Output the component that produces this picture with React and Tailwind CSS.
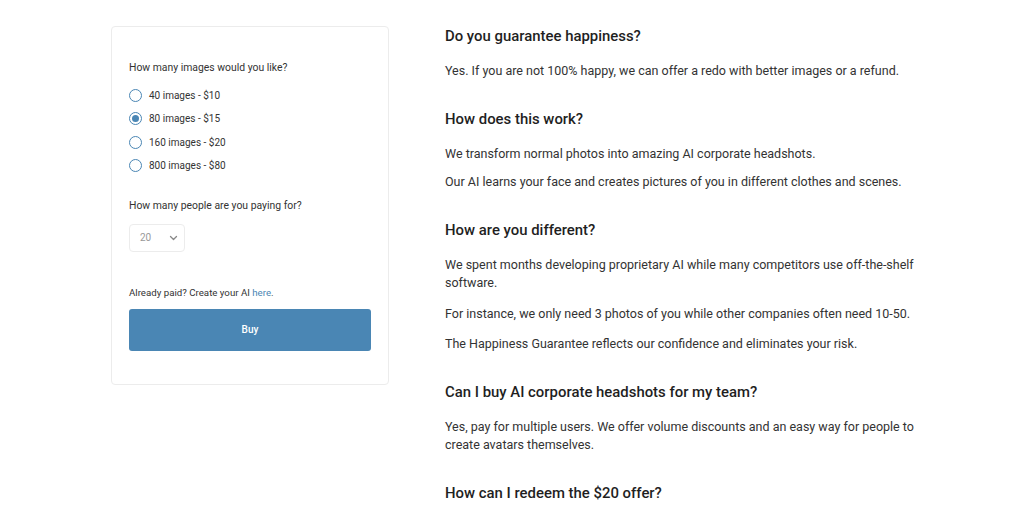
import React from 'react';

const OPTIONS = ['40 images - $10', '80 images - $15', '160 images - $20', '800 images - $80'];

function Radio({ checked }) {
  return (
    <span className="w-[13px] h-[13px] rounded-full border-[1.5px] border-[#4a86b4] flex items-center justify-center shrink-0 bg-white">
      {checked && <span className="w-[7px] h-[7px] rounded-full bg-[#4a86b4]" />}
    </span>
  );
}

function Faq({ q, wide, children }) {
  return (
    <div className="mb-[29px]">
      <h3 className="text-[14.9px] font-medium text-[#1f1f1f] leading-[20px] mb-[16px]">{q}</h3>
      <div className={`flex flex-col ${wide ? 'gap-[12.5px]' : 'gap-[10px]'} text-[12.5px] leading-[18px] text-[#333]`}>{children}</div>
    </div>
  );
}

export default function App() {
  return (
    <div className="w-[1024px] h-[506px] overflow-hidden bg-white flex pt-[26px] pl-[111px] font-['Roboto',sans-serif]">
      {/* order card */}
      <div className="w-[278px] h-[359px] border border-[#ececec] rounded-[4px] px-[17px] pt-[34px] shrink-0">
        <p className="text-[10.4px] text-[#333] leading-[14px]">How many images would you like?</p>
        <div className="flex flex-col gap-[9.5px] mt-[13px]">
          {OPTIONS.map((o, i) => (
            <label key={o} className="flex items-center gap-[7px] h-[14px] text-[10px] text-[#333]">
              <Radio checked={i === 1} />
              {o}
            </label>
          ))}
        </div>
        <p className="text-[10.4px] text-[#333] leading-[14px] mt-[26px]">How many people are you paying for?</p>
        <div className="mt-[11px] w-[56px] h-[28px] border border-[#ececec] rounded-[4px] flex items-center justify-between pl-[10px] pr-[6px] text-[10px] text-[#999]">
          <span>20</span>
          <svg width="9" height="6" viewBox="0 0 9 6" fill="none" stroke="#888" strokeWidth="1.3" strokeLinecap="round" strokeLinejoin="round">
            <path d="M1.5 1.5 4.5 4.5 7.5 1.5" />
          </svg>
        </div>
        <p className="text-[9.7px] text-[#333] leading-[14px] mt-[34px]">
          Already paid? Create your AI <span className="text-[#4a86b4]">here</span>.
        </p>
        <button className="mt-[9px] w-[242px] h-[42px] rounded-[3px] bg-[#4a86b4] text-white text-[10px] font-medium flex items-center justify-center">
          Buy
        </button>
      </div>

      {/* FAQ */}
      <div className="w-[475px] ml-[56px]">
        <Faq q="Do you guarantee happiness?">
          <p>Yes. If you are not 100% happy, we can offer a redo with better images or a refund.</p>
        </Faq>
        <Faq q="How does this work?">
          <p>We transform normal photos into amazing AI corporate headshots.</p>
          <p>Our AI learns your face and creates pictures of you in different clothes and scenes.</p>
        </Faq>
        <Faq q="How are you different?" wide>
          <p>We spent months developing proprietary AI while many competitors use off-the-shelf software.</p>
          <p>For instance, we only need 3 photos of you while other companies often need 10-50.</p>
          <p>The Happiness Guarantee reflects our confidence and eliminates your risk.</p>
        </Faq>
        <Faq q="Can I buy AI corporate headshots for my team?">
          <p>Yes, pay for multiple users. We offer volume discounts and an easy way for people to create avatars themselves.</p>
        </Faq>
        <Faq q="How can I redeem the $20 offer?">
          <p>&nbsp;</p>
        </Faq>
      </div>
    </div>
  );
}
